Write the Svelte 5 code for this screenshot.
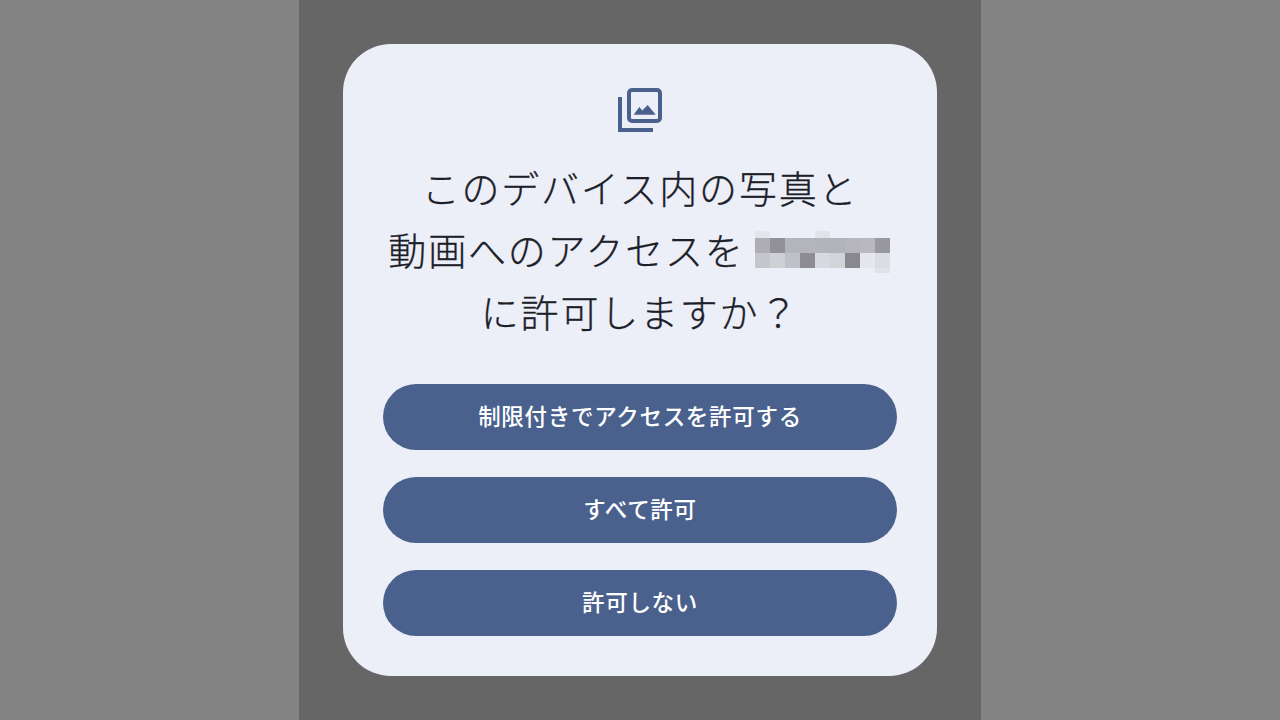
<script>
  const blank = 'transparent';
  const rows = [
    ['#e4e5ec',blank,blank,blank,'#e2e3ea',blank,blank,blank,blank],
    ['#adadb3','#919197','#b4b4bb','#b4b4bb','#b3b3ba','#b3b3ba','#b6b6bc','#b8b8bf','#98989e'],
    ['#c5c6cc','#cfd0d6','#c0c1c8','#8c8c92','#d8d9e0','#d3d4da','#88888e','#e6e7ee','#dcdde3'],
    [blank,blank,blank,blank,blank,blank,blank,blank,'#e1e2e9']
  ];
  const heights = [7, 15, 15, 5];
</script>

<div class="page">
  <div class="stage">
    <div class="card">
      <svg class="icon" viewBox="0 0 44 44" aria-hidden="true">
        <rect x="11" y="2" width="31" height="31" rx="3" fill="none" stroke="#4a618d" stroke-width="4"/>
        <path d="M2 9v33h33" fill="none" stroke="#4a618d" stroke-width="4"/>
        <path d="M15.700 26.700l5.600-7.700 3 3.600 5.400-5.600 8 9.700z" fill="#4a618d"/>
      </svg>
      <h1>
        <span class="line">このデバイス内の写真と</span>
        <span class="line">動画へのアクセスを<span class="mosaic" aria-hidden="true">
          {#each rows as row, r}
            {#each row as c}
              <i style="background:{c};height:{heights[r]}px"></i>
            {/each}
          {/each}
        </span></span>
        <span class="line">に許可しますか？</span>
      </h1>
      <div class="actions">
        <button>制限付きでアクセスを許可する</button>
        <button>すべて許可</button>
        <button>許可しない</button>
      </div>
    </div>
  </div>
</div>

<style>
  :global(body) {
    margin: 0;
    background: #838383;
  }
  .page {
    display: flex;
    justify-content: center;
    height: 720px;
    overflow: hidden;
  }
  .stage {
    width: 682px;
    height: 720px;
    background: #666666;
    display: flex;
    justify-content: center;
    padding-top: 44px;
    box-sizing: border-box;
  }
  .card {
    width: 594px;
    height: 632px;
    box-sizing: border-box;
    background: #eceef8;
    border-radius: 48px;
    padding: 44px 40px 0;
    display: flex;
    flex-direction: column;
    align-items: center;
    font-family: "Noto Sans CJK JP", sans-serif;
  }
  .icon {
    width: 44px;
    height: 44px;
    display: block;
  }
  h1 {
    margin: 24px 0 0;
    font-size: 38px;
    font-weight: 300;
    -webkit-text-stroke: 0.300px #1c1e29;
    color: #1c1e29;
    letter-spacing: 1.800px;
    line-height: 62px;
    text-align: center;
    width: 100%;
  }
  .line {
    display: flex;
    justify-content: center;
    align-items: center;
    height: 62px;
    white-space: nowrap;
  }
  .mosaic {
    display: inline-grid;
    grid-template-columns: repeat(9, 15px);
    margin: 6px 2px 0 10px;
    flex: none;
  }
  .mosaic i {
    display: block;
  }
  .actions {
    width: 100%;
    margin-top: 42px;
    display: flex;
    flex-direction: column;
    gap: 27px;
  }
  button {
    height: 66px;
    border: 0;
    border-radius: 33px;
    background: #4a618d;
    color: #ffffff;
    font-family: inherit;
    font-size: 22.500px;
    font-weight: 500;
    letter-spacing: 0.700px;
    padding: 0 0 5px;
  }
</style>
